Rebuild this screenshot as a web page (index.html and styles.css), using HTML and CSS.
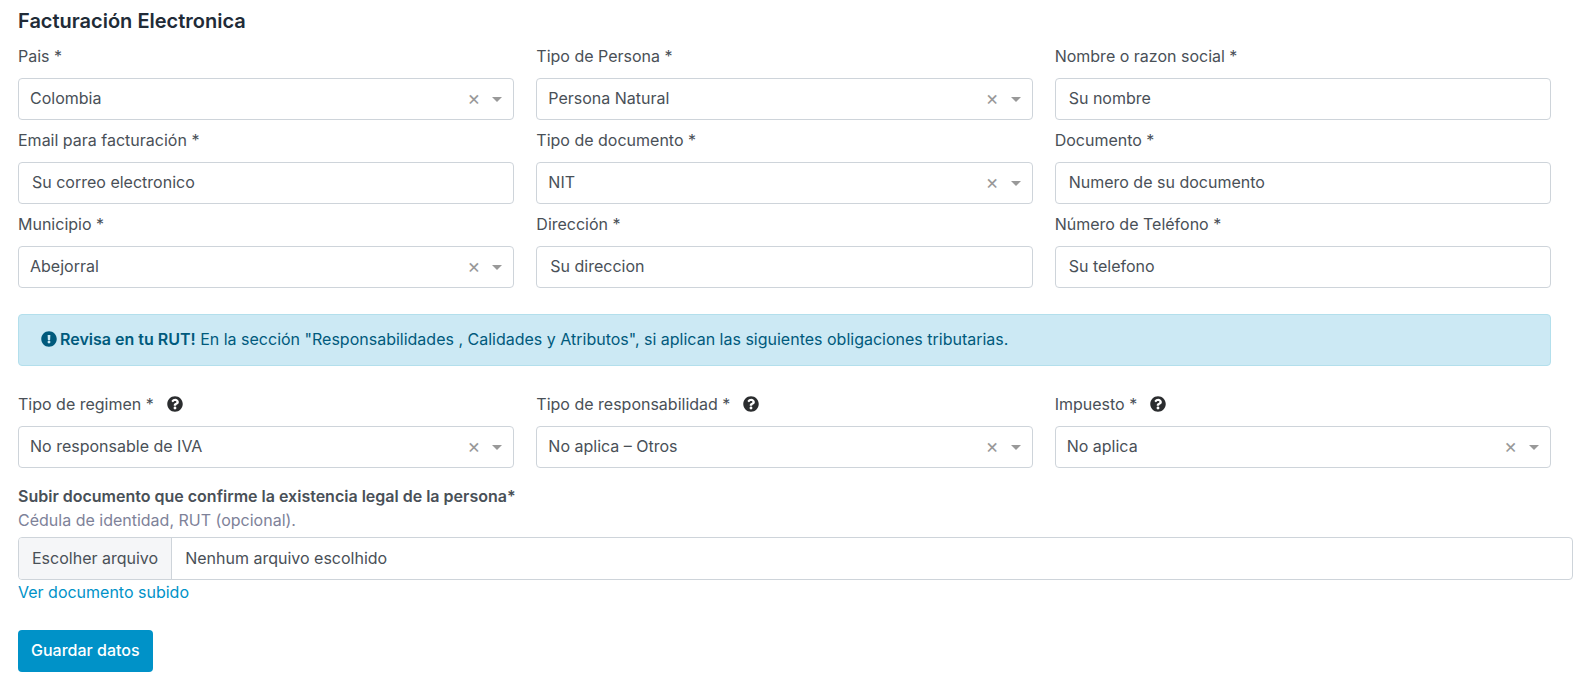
FILE: index.html
```html
<!DOCTYPE html>
<html lang="es">
<head>
	<meta charset="UTF-8">
	<meta name="viewport" content="width=device-width, initial-scale=1.0">
	<title>Facturación Electronica</title>
	<link rel="stylesheet" href="styles.css">
</head>
<body>
	<svg class="sprite" aria-hidden="true">
		<symbol id="icon-question" viewBox="0 0 512 512">
			<path d="M504 256c0 137-111 248-248 248S8 393 8 256 119 8 256 8s248 111 248 248zM262.700 90c-54.500 0-89.300 23-116.500 63.800-3.500 5.300-2.400 12.400 2.700 16.300l34.700 26.300c5.200 3.900 12.600 3 16.700-2.100 17.900-22.700 30.100-35.800 57.300-35.800 20.400 0 45.700 13.100 45.700 33 0 15-12.400 22.700-32.500 34C247.100 238.500 216 254.900 216 296v4c0 6.600 5.400 12 12 12h56c6.600 0 12-5.400 12-12v-1.300c0-28.500 83.200-29.600 83.200-106.700 0-58-60.200-102-116.500-102zM256 338c-25.400 0-46 20.600-46 46s20.600 46 46 46 46-20.600 46-46-20.600-46-46-46z"/>
		</symbol>
		<symbol id="icon-exclamation" viewBox="0 0 512 512">
			<path d="M504 256c0 137-111 248-248 248S8 393 8 256 119 8 256 8s248 111 248 248zM256 306c-25.400 0-46 20.600-46 46s20.600 46 46 46 46-20.600 46-46-20.600-46-46-46zM212.300 140.700l7.400 136c.3 6.400 5.600 11.300 12 11.300h48.500c6.400 0 11.600-5 12-11.300l7.400-136c.4-6.900-5.100-12.700-12-12.700h-63.400c-6.900 0-12.300 5.800-11.900 12.700z"/>
		</symbol>
	</svg>

	<form class="billing" onsubmit="event.preventDefault()" autocomplete="off">
		<h2 class="title">Facturación Electronica</h2>

		<div class="fields">
			<div class="field">
				<label for="pais">Pais *</label>
				<div class="select">
					<select id="pais"><option>Colombia</option></select>
					<button type="button" class="clear" aria-label="Borrar">×</button>
				</div>
			</div>
			<div class="field">
				<label for="persona">Tipo de Persona *</label>
				<div class="select">
					<select id="persona"><option>Persona Natural</option></select>
					<button type="button" class="clear" aria-label="Borrar">×</button>
				</div>
			</div>
			<div class="field">
				<label for="nombre">Nombre o razon social *</label>
				<input type="text" id="nombre" class="control" placeholder="Su nombre">
			</div>
			<div class="field">
				<label for="email">Email para facturación *</label>
				<input type="email" id="email" class="control" placeholder="Su correo electronico">
			</div>
			<div class="field">
				<label for="tipodoc">Tipo de documento *</label>
				<div class="select">
					<select id="tipodoc"><option>NIT</option></select>
					<button type="button" class="clear" aria-label="Borrar">×</button>
				</div>
			</div>
			<div class="field">
				<label for="documento">Documento *</label>
				<input type="text" id="documento" class="control" placeholder="Numero de su documento">
			</div>
			<div class="field">
				<label for="municipio">Municipio *</label>
				<div class="select">
					<select id="municipio"><option>Abejorral</option></select>
					<button type="button" class="clear" aria-label="Borrar">×</button>
				</div>
			</div>
			<div class="field">
				<label for="direccion">Dirección *</label>
				<input type="text" id="direccion" class="control" placeholder="Su direccion">
			</div>
			<div class="field">
				<label for="telefono">Número de Teléfono *</label>
				<input type="tel" id="telefono" class="control" placeholder="Su telefono">
			</div>
		</div>

		<div class="alert" role="alert">
			<svg class="icon"><use href="#icon-exclamation"/></svg>
			<p><strong>Revisa en tu RUT!</strong> En la sección "Responsabilidades , Calidades y Atributos", si aplican las siguientes obligaciones tributarias.</p>
		</div>

		<div class="fields">
			<div class="field">
				<label for="regimen">Tipo de regimen * <svg class="icon help"><use href="#icon-question"/></svg></label>
				<div class="select">
					<select id="regimen"><option>No responsable de IVA</option></select>
					<button type="button" class="clear" aria-label="Borrar">×</button>
				</div>
			</div>
			<div class="field">
				<label for="responsabilidad">Tipo de responsabilidad * <svg class="icon help"><use href="#icon-question"/></svg></label>
				<div class="select">
					<select id="responsabilidad"><option>No aplica – Otros</option></select>
					<button type="button" class="clear" aria-label="Borrar">×</button>
				</div>
			</div>
			<div class="field">
				<label for="impuesto">Impuesto * <svg class="icon help"><use href="#icon-question"/></svg></label>
				<div class="select">
					<select id="impuesto"><option>No aplica</option></select>
					<button type="button" class="clear" aria-label="Borrar">×</button>
				</div>
			</div>
		</div>

		<div class="upload">
			<label for="archivo" class="upload-title">Subir documento que confirme la existencia legal de la persona*</label>
			<p class="hint">Cédula de identidad, RUT (opcional).</p>
			<input type="file" id="archivo" class="file-input">
			<label for="archivo" class="file">
				<span class="file-btn">Escolher arquivo</span>
				<span class="file-name">Nenhum arquivo escolhido</span>
			</label>
			<a href="#">Ver documento subido</a>
		</div>

		<button type="submit" class="btn">Guardar datos</button>
	</form>
</body>
</html>
```
FILE: styles.css
```css
* {
    box-sizing: border-box;
}
body {
    margin: 0;
    background-color: #fff;
    color: #495057;
    font-family: Inter, "Liberation Sans", sans-serif;
    font-size: 16px;
    line-height: 24px;
}
p {
    margin: 0;
}
input, select, button {
    font: inherit;
    color: inherit;
}
a {
    color: #0092c8;
    text-decoration: none;
}
.sprite {
    display: none;
}
.billing {
    padding: 8px 18px 12px;
}
.title {
    margin: 0 0 10px;
    color: #212b37;
    font-size: 20px;
    line-height: 26px;
    font-weight: 600;
}

/* form grid */
.fields {
    display: grid;
    grid-template-columns: repeat(3, 1fr);
    gap: 8px 22px;
    padding-right: 22px;
}
.field {
    display: flex;
    flex-direction: column;
    gap: 10px;
}
.field label {
    display: flex;
    align-items: center;
}
.control, .select select {
    width: 100%;
    height: 42px;
    border: 1px solid #ced4da;
    border-radius: 4px;
    background-color: #fff;
}
.control {
    padding: 0 13px 2px;
}
.control::placeholder {
    color: #495057;
    opacity: 1;
}
.select {
    position: relative;
}
.select select {
    display: block;
    appearance: none;
    padding: 0 60px 2px 11px;
}
.select::after {
    content: "";
    position: absolute;
    top: 19px;
    right: 12px;
    border: 5px solid transparent;
    border-top-color: #999;
    border-bottom: 0;
    pointer-events: none;
}
.clear {
    position: absolute;
    top: 8px;
    right: 32px;
    width: 17px;
    padding: 0;
    border: none;
    background: none;
    color: #999;
    font-size: 20px;
    cursor: pointer;
}

.icon {
    width: 16px;
    height: 16px;
    flex: none;
    fill: currentColor;
}
.help {
    margin-left: 13px;
    color: #2b2d2f;
}

.alert {
    display: flex;
    align-items: center;
    gap: 3px;
    margin: 26px 22px 26px 0;
    padding: 12px 22px 14px;
    border: 1px solid #b3dfec;
    border-radius: 4px;
    background-color: #cce9f4;
    color: #005a7c;
}
strong, .upload-title {
    font-weight: 600;
}

/* file upload */
.upload {
    display: flex;
    flex-direction: column;
    align-items: flex-start;
    margin: 16px 0 26px;
}
.hint {
    margin-bottom: 5px;
    color: #7e8299;
}
.file-input {
    position: absolute;
    width: 1px;
    height: 1px;
    opacity: 0;
}
.file {
    display: flex;
    align-self: stretch;
    border: 1px solid #ced4da;
    border-radius: 4px;
    overflow: hidden;
    cursor: pointer;
}
.file-btn {
    padding: 8px 13px 9px;
    border-right: 1px solid #ced4da;
    background-color: #f5f6f8;
}
.file-name {
    padding: 8px 13px 9px;
}

.btn {
    padding: 8px 13px 10px;
    border: none;
    border-radius: 4px;
    background-color: #0092c8;
    color: #fff;
    font-weight: 500;
    cursor: pointer;
}
```
